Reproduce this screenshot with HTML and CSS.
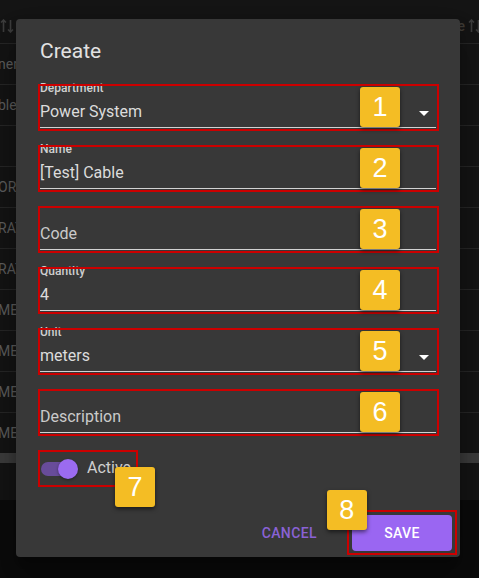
FILE: index.html
```html
<!DOCTYPE html>
<html>
<head>
<meta charset="utf-8">
<link rel="stylesheet" href="styles.css">
</head>
<body>
<div class="backdrop">
  <div class="table">
    <div class="thead">
      <svg class="sort sort-left" width="14" height="14" viewBox="0 0 14 14"><path d="M3.5 1v12M1 3.5l2.5-2.5 2.5 2.5M10.5 13V1M8 10.5l2.5 2.5 2.5-2.5" fill="none" stroke="currentColor" stroke-width="1.6"/></svg>
      <span class="head-code">Code
        <svg class="sort" width="14" height="14" viewBox="0 0 14 14"><path d="M3.5 1v12M1 3.5l2.5-2.5 2.5 2.5M10.5 13V1M8 10.5l2.5 2.5 2.5-2.5" fill="none" stroke="currentColor" stroke-width="1.6"/></svg>
      </span>
    </div>
    <div class="row"><span class="cell">neral</span></div>
    <div class="row"><span class="cell">bles</span></div>
    <div class="row"><span class="cell"></span></div>
    <div class="row"><span class="cell">ORAT</span></div>
    <div class="row"><span class="cell">RATE</span></div>
    <div class="row"><span class="cell">RATE</span></div>
    <div class="row"><span class="cell">METE</span></div>
    <div class="row"><span class="cell">METE</span></div>
    <div class="row"><span class="cell">METE</span></div>
    <div class="row row-last"><span class="cell">METE</span></div>
    <div class="scrollbar"></div>
  </div>
</div>

<div class="dialog">
  <h2 class="title">Create</h2>
  <div class="fields">
    <div class="field annot">
      <div class="label">Department</div>
      <div class="value-row"><span class="value">Power System</span><svg class="arrow" width="24" height="24" viewBox="0 0 24 24"><path d="M7 10l5 5 5-5z" fill="#fff"/></svg></div>
      <div class="underline"></div>
      <span class="badge">1</span>
    </div>
    <div class="field annot">
      <div class="label">Name</div>
      <div class="value-row"><span class="value">[Test] Cable</span></div>
      <div class="underline"></div>
      <span class="badge">2</span>
    </div>
    <div class="field annot">
      <div class="label"></div>
      <div class="value-row"><span class="value placeholder">Code</span></div>
      <div class="underline"></div>
      <span class="badge">3</span>
    </div>
    <div class="field annot">
      <div class="label">Quantity</div>
      <div class="value-row"><span class="value">4</span></div>
      <div class="underline"></div>
      <span class="badge">4</span>
    </div>
    <div class="field annot">
      <div class="label">Unit</div>
      <div class="value-row"><span class="value">meters</span><svg class="arrow" width="24" height="24" viewBox="0 0 24 24"><path d="M7 10l5 5 5-5z" fill="#fff"/></svg></div>
      <div class="underline"></div>
      <span class="badge">5</span>
    </div>
    <div class="field annot">
      <div class="label"></div>
      <div class="value-row"><span class="value placeholder">Description</span></div>
      <div class="underline"></div>
      <span class="badge">6</span>
    </div>
    <div class="toggle-row annot">
      <span class="switch"><span class="track"></span><span class="knob"></span></span>
      <span class="toggle-label">Active</span>
      <span class="badge badge-7">7</span>
    </div>
  </div>
  <div class="actions">
    <span class="cancel">CANCEL</span>
    <span class="save annot">SAVE<span class="badge badge-8">8</span></span>
  </div>
</div>
</body>
</html>
```

FILE: styles.css
```css
html, body {
  margin: 0;
  padding: 0;
}
body {
  width: 479px;
  height: 578px;
  overflow: hidden;
  background: #0b0b0b;
  font-family: Roboto, "Liberation Sans", sans-serif;
  position: relative;
}
.backdrop {
  width: 479px;
}
.table {
  background: #141414;
  height: 500px;
  display: flex;
  flex-direction: column;
}
.thead {
  height: 43px;
  border-bottom: 1px solid #262626;
  display: flex;
  align-items: center;
  justify-content: space-between;
  color: #3c3c3c;
  flex: none;
}
.sort {
  display: block;
}
.sort-left {
  margin-left: 0;
  margin-top: 8px;
}
.head-code {
  display: flex;
  align-items: center;
  gap: 3px;
  font-size: 14px;
  font-weight: 500;
  color: #3e3a34;
  margin-right: -3px;
  margin-top: 8px;
}
.head-code .sort {
  color: #3c3c3c;
}
.row {
  height: 40px;
  border-bottom: 1px solid #262626;
  display: flex;
  align-items: center;
  flex: none;
}
.row-last {
  border-bottom: none;
}
.cell {
  font-size: 14px;
  color: #5c5c5c;
  margin-left: -2px;
  white-space: nowrap;
}
.scrollbar {
  height: 10px;
  background: #3b3b3b;
  flex: none;
}

.dialog {
  position: absolute;
  left: 16px;
  top: 19px;
  width: 444px;
  height: 538px;
  box-sizing: border-box;
  background: #383838;
  border-radius: 4px;
  box-shadow: 0 11px 15px rgba(0,0,0,0.3), 0 24px 38px rgba(0,0,0,0.2);
  padding: 16px 0 0 24px;
  display: flex;
  flex-direction: column;
}
.title {
  margin: 0 0 17px 0;
  font-size: 21px;
  line-height: 32px;
  font-weight: 400;
  color: #e2e2e2;
}
.fields {
  display: flex;
  flex-direction: column;
  gap: 14px;
}
.annot {
  position: relative;
}
.annot::after {
  content: "";
  position: absolute;
  left: -2px;
  right: -3px;
  top: 0;
  bottom: 0;
  border: 2px solid #cc0000;
  z-index: 2;
  pointer-events: none;
}
.field {
  width: 396px;
  height: 47px;
  box-sizing: border-box;
}
.label {
  font-size: 12px;
  line-height: 9px;
  height: 9px;
  color: #cfcfcf;
  font-weight: 500;
}
.value-row {
  margin-top: 6px;
  height: 24px;
  display: flex;
  align-items: flex-start;
}
.value {
  flex: 1;
  font-size: 16px;
  line-height: 25px;
  color: #dcdcdc;
}
.value.placeholder {
  color: #cacaca;
}
.arrow {
  display: block;
  margin-top: 2px;
}
.underline {
  margin-top: 4px;
  height: 1px;
  background: #d2d2d2;
}
.badge {
  position: absolute;
  left: 320px;
  top: 3px;
  width: 40px;
  height: 40px;
  background: #f4bd24;
  border-radius: 3px;
  box-shadow: 0 2px 4px rgba(0,0,0,0.55);
  color: #ffffff;
  font-family: "Liberation Sans", Arial, sans-serif;
  font-size: 27px;
  line-height: 40px;
  text-align: center;
  z-index: 3;
}
.toggle-row {
  width: 95px;
  height: 37px;
  display: flex;
  align-items: center;
}
.switch {
  position: relative;
  width: 38px;
  height: 20px;
  margin-left: 1px;
  flex: none;
}
.track {
  position: absolute;
  left: 0;
  top: 3px;
  width: 34px;
  height: 14px;
  border-radius: 7px;
  background: #684c9a;
}
.knob {
  position: absolute;
  left: 17px;
  top: 0;
  width: 20px;
  height: 20px;
  border-radius: 50%;
  background: #9b6bf0;
  box-shadow: 0 1px 3px rgba(0,0,0,0.4);
}
.toggle-label {
  margin-left: 8px;
  font-size: 16px;
  line-height: 24px;
  color: #cfcfcf;
  margin-bottom: 1px;
}
.badge-7 {
  left: 75px;
  top: 17px;
}
.actions {
  margin-top: auto;
  display: flex;
  justify-content: flex-end;
  align-items: center;
  padding: 0 8px 6px 0;
}
.cancel {
  font-size: 14px;
  font-weight: 500;
  letter-spacing: 0.4px;
  color: #8a62d6;
  margin-right: 35px;
  line-height: 36px;
}
.save {
  width: 100px;
  height: 36px;
  border-radius: 4px;
  background: #9a66f2;
  color: #ffffff;
  font-size: 14px;
  font-weight: 500;
  letter-spacing: 0.4px;
  line-height: 36px;
  text-align: center;
}
.save.annot::after {
  left: -5px;
  right: -5px;
  top: -5px;
  bottom: -4px;
}
.badge-8 {
  left: -25px;
  top: -25px;
}
```
